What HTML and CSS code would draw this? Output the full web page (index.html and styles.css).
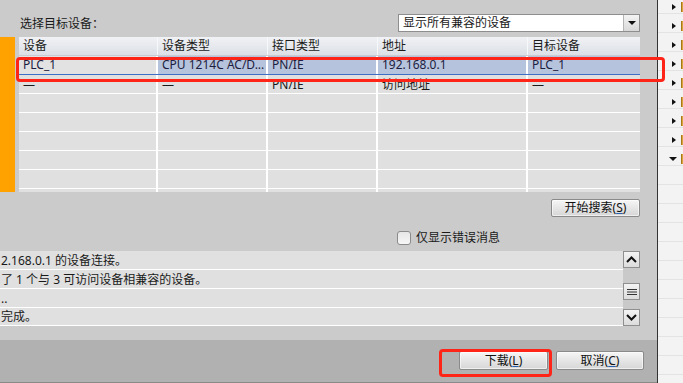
FILE: index.html
```html
<!doctype html>
<html lang="zh">

<head>
    <meta charset="UTF-8" />
    <title>扩展下载到设备</title>
    <link rel="stylesheet" href="styles.css">
</head>

<body>
    <div class="screen">
        <div class="dialog">
            <div class="target-row">
                <span class="label">选择目标设备<span class="colon">：</span></span>
                <div class="combo">
                    <span class="combo-text">显示所有兼容的设备</span>
                    <span class="combo-btn"><span class="tri-down"></span></span>
                </div>
            </div>

            <div class="table-area">
                <div class="marker"></div>
                <div class="grid">
                    <div class="row head">
                        <div class="cell c1">设备</div>
                        <div class="cell c2">设备类型</div>
                        <div class="cell c3">接口类型</div>
                        <div class="cell c4">地址</div>
                        <div class="cell c5">目标设备</div>
                    </div>
                    <div class="row sel">
                        <div class="cell c1">PLC_1</div>
                        <div class="cell c2">CPU 1214C AC/D...</div>
                        <div class="cell c3">PN/IE</div>
                        <div class="cell c4">192.168.0.1</div>
                        <div class="cell c5">PLC_1</div>
                    </div>
                    <div class="row">
                        <div class="cell c1">—</div>
                        <div class="cell c2">—</div>
                        <div class="cell c3">PN/IE</div>
                        <div class="cell c4">访问地址</div>
                        <div class="cell c5">—</div>
                    </div>
                    <div class="row"><div class="cell c1"></div><div class="cell c2"></div><div class="cell c3"></div><div class="cell c4"></div><div class="cell c5"></div></div>
                    <div class="row"><div class="cell c1"></div><div class="cell c2"></div><div class="cell c3"></div><div class="cell c4"></div><div class="cell c5"></div></div>
                    <div class="row"><div class="cell c1"></div><div class="cell c2"></div><div class="cell c3"></div><div class="cell c4"></div><div class="cell c5"></div></div>
                    <div class="row"><div class="cell c1"></div><div class="cell c2"></div><div class="cell c3"></div><div class="cell c4"></div><div class="cell c5"></div></div>
                    <div class="row"><div class="cell c1"></div><div class="cell c2"></div><div class="cell c3"></div><div class="cell c4"></div><div class="cell c5"></div></div>
                    <div class="row"><div class="cell c1"></div><div class="cell c2"></div><div class="cell c3"></div><div class="cell c4"></div><div class="cell c5"></div></div>
                </div>
            </div>

            <div class="search-row">
                <div class="btn search">开始搜索(<u>S</u>)</div>
            </div>

            <div class="filter-row">
                <span class="check"></span>
                <span class="check-label">仅显示错误消息</span>
            </div>

            <div class="log">
                <div class="log-lines">
                    <div class="line">2.168.0.1 的设备连接。</div>
                    <div class="line">了 1 个与 3 可访问设备相兼容的设备。</div>
                    <div class="line">..</div>
                    <div class="line">完成。</div>
                </div>
                <div class="scroll">
                    <div class="sb-btn">
                        <svg width="11" height="7" viewBox="0 0 11 7"><path d="M1 6 L5.5 1.5 L10 6" fill="none" stroke="#111" stroke-width="2"/></svg>
                    </div>
                    <div class="sb-track"></div>
                    <div class="sb-btn">
                        <svg width="10" height="8" viewBox="0 0 10 8"><path d="M0 1.5 H10 M0 4 H10 M0 6.5 H10" stroke="#333" stroke-width="1"/></svg>
                    </div>
                    <div class="sb-track short"></div>
                    <div class="sb-btn">
                        <svg width="11" height="7" viewBox="0 0 11 7"><path d="M1 1 L5.5 5.5 L10 1" fill="none" stroke="#111" stroke-width="2"/></svg>
                    </div>
                </div>
            </div>

            <div class="footer">
                <div class="btn">下载(<u>L</u>)</div>
                <div class="btn">取消(<u>C</u>)</div>
            </div>
        </div>

        <div class="side">
            <div class="side-row"><span class="tri-right"></span><span class="tick"></span></div>
            <div class="side-row"><span class="tri-right"></span><span class="tick"></span></div>
            <div class="side-row"><span class="tri-right"></span><span class="tick"></span></div>
            <div class="side-row"><span class="tri-right"></span><span class="tick"></span></div>
            <div class="side-row"><span class="tri-right"></span><span class="tick"></span></div>
            <div class="side-row"><span class="tri-right"></span><span class="tick"></span></div>
            <div class="side-row"><span class="tri-right"></span><span class="tick"></span></div>
            <div class="side-row"><span class="tri-right"></span><span class="tick"></span></div>
            <div class="side-row"><span class="tri-open"></span><span class="tick"></span></div>
            <div class="side-row"></div>
            <div class="side-row"></div>
            <div class="side-row"></div>
            <div class="side-row"></div>
            <div class="side-row"></div>
            <div class="side-row"></div>
            <div class="side-row"></div>
            <div class="side-row"></div>
            <div class="side-row"></div>
            <div class="side-row"></div>
            <div class="side-row"></div>
            <div class="side-row"></div>
        </div>

        <div class="mark mark-row"></div>
        <div class="mark mark-btn"></div>
    </div>
</body>

</html>
```

FILE: styles.css
```css
body {
    margin: 0;
    padding: 0;
    width: 683px;
    height: 383px;
    overflow: hidden;
    font-family: "Noto Sans", "Noto Sans CJK SC", sans-serif;
    font-size: 12px;
    color: #1a1a1a;
}

.screen {
    position: relative;
    display: flex;
    width: 683px;
    height: 383px;
    overflow: hidden;
}

.dialog {
    display: flex;
    flex-direction: column;
    width: 657px;
    height: 383px;
    background: #cbcbcb;
    border-right: 1px solid #333;
}

/* target selector */
.target-row {
    display: flex;
    align-items: center;
    height: 18px;
    margin-top: 14px;
    padding: 0 17px 0 20px;
}

.label {
    line-height: 18px;
}

.colon {
    font-family: "Noto Sans CJK TC", sans-serif;
}

.combo {
    display: flex;
    margin-left: auto;
    width: 242px;
    height: 18px;
    box-sizing: border-box;
    border: 1px solid #8e8e8e;
    background: #fff;
}

.combo-text {
    flex: 1;
    padding-left: 4px;
    line-height: 16px;
}

.combo-btn {
    display: flex;
    align-items: center;
    justify-content: center;
    width: 15px;
    border-left: 1px solid #b5b5b5;
    background: linear-gradient(#f3f3f3, #d9d9d9);
}

.tri-down {
    width: 0;
    height: 0;
    border-left: 4px solid transparent;
    border-right: 4px solid transparent;
    border-top: 4px solid #111;
}

/* device table */
.table-area {
    display: flex;
    height: 155px;
    margin-top: 5px;
}

.marker {
    width: 15px;
    background: #ffa200;
}

.grid {
    width: 621px;
    margin-left: 4px;
    overflow: hidden;
    background: #e0e0e0;
}

.row {
    display: flex;
    height: 19px;
    box-sizing: border-box;
    border-bottom: 1px solid #fff;
}

.cell {
    box-sizing: border-box;
    padding-left: 4px;
    line-height: 19px;
    white-space: nowrap;
    overflow: hidden;
    border-right: 2px solid #fff;
}

.c1 { width: 139px; }
.c2 { width: 110px; }
.c3 { width: 110px; }
.c4 { width: 150px; }
.c5 { width: 112px; border-right: none; }

.row.head {
    background: linear-gradient(#f1f2f5, #dce0e6);
    border-bottom: 1px solid #c9ccd2;
}

.row.head .cell {
    line-height: 18px;
    border-right: 1px solid #f7f8fa;
}

.row.head .c5 {
    border-right: none;
}

.row.sel {
    border-bottom: 1px solid #3d6fc6;
}

.row.sel .cell {
    line-height: 18px;
    background: #b5c3dc;
    color: #1d1d40;
}

.row.sel .c1 {
    background: #e2e2e2;
}

/* search + filter */
.search-row {
    display: flex;
    justify-content: flex-end;
    margin-top: 7px;
    padding-right: 17px;
}

.btn {
    box-sizing: border-box;
    width: 89px;
    height: 19px;
    line-height: 17px;
    text-align: center;
    border: 1px solid #8a8a8a;
    border-radius: 2px;
    background: linear-gradient(#f6f6f6, #e6e6e6 50%, #d6d6d6);
    box-shadow: inset 0 0 0 1px rgba(255, 255, 255, 0.6);
    color: #111;
}

.btn u {
    text-decoration-color: #2a5fb0;
}

.search {
    height: 18px;
    line-height: 16px;
}

.filter-row {
    display: flex;
    align-items: center;
    height: 14px;
    margin-top: 14px;
    padding-left: 397px;
}

.check {
    width: 14px;
    height: 14px;
    box-sizing: border-box;
    border: 1px solid #8b8b8b;
    border-radius: 3px;
    background: linear-gradient(#e6e6e6, #f6f6f6);
}

.check-label {
    margin-left: 5px;
    line-height: 14px;
}

/* message log */
.log {
    display: flex;
    height: 75px;
    margin-top: 6px;
    width: 640px;
}

.log-lines {
    width: 623px;
    background: #e0e0e0;
}

.line {
    height: 19px;
    box-sizing: border-box;
    border-bottom: 1px solid #fff;
    line-height: 19px;
    padding-left: 1px;
    white-space: nowrap;
}

.line:last-child {
    height: 18px;
    line-height: 18px;
}

.scroll {
    display: flex;
    flex-direction: column;
    width: 17px;
    background: #c9c9c9;
}

.sb-btn {
    display: flex;
    align-items: center;
    justify-content: center;
    height: 17px;
    box-sizing: border-box;
    border: 1px solid #8f8f8f;
    background: linear-gradient(#f4f4f4, #dcdcdc);
}

.sb-track {
    height: 15px;
}

.sb-track.short {
    height: 9px;
}

.footer {
    display: flex;
    justify-content: flex-end;
    gap: 8px;
    margin-top: 14px;
    padding: 11px 13px 0 0;
    flex: 1;
    background: #b1b1b1;
    border-bottom: 1px solid #8a8a8a;
}

.footer .btn + .btn {
    width: 88px;
}

/* right side panel */
.side {
    flex: 1;
    margin-top: -5px;
    background: #f3f3f3;
}

.side-row {
    display: flex;
    height: 19px;
    box-sizing: border-box;
    border-bottom: 1px solid #e3e3e3;
}

.tri-right {
    width: 0;
    height: 0;
    margin: 9px 0 0 14px;
    border-top: 3.5px solid transparent;
    border-bottom: 3.5px solid transparent;
    border-left: 4px solid #111;
}

.tri-open {
    width: 0;
    height: 0;
    margin: 10px 0 0 11px;
    border-left: 4px solid transparent;
    border-right: 4px solid transparent;
    border-top: 4px solid #111;
}

.tick {
    width: 1px;
    height: 10px;
    margin: 7px 0 0 auto;
    background: #d9a43c;
    border-left: 1px solid #a87818;
}

/* red annotation frames */
.mark {
    position: absolute;
    box-sizing: border-box;
    border: 3px solid #ff2418;
    border-radius: 4px;
}

.mark-row {
    left: 16px;
    top: 57px;
    width: 649px;
    height: 25px;
}

.mark-btn {
    left: 439px;
    top: 349px;
    width: 113px;
    height: 28px;
}
```
